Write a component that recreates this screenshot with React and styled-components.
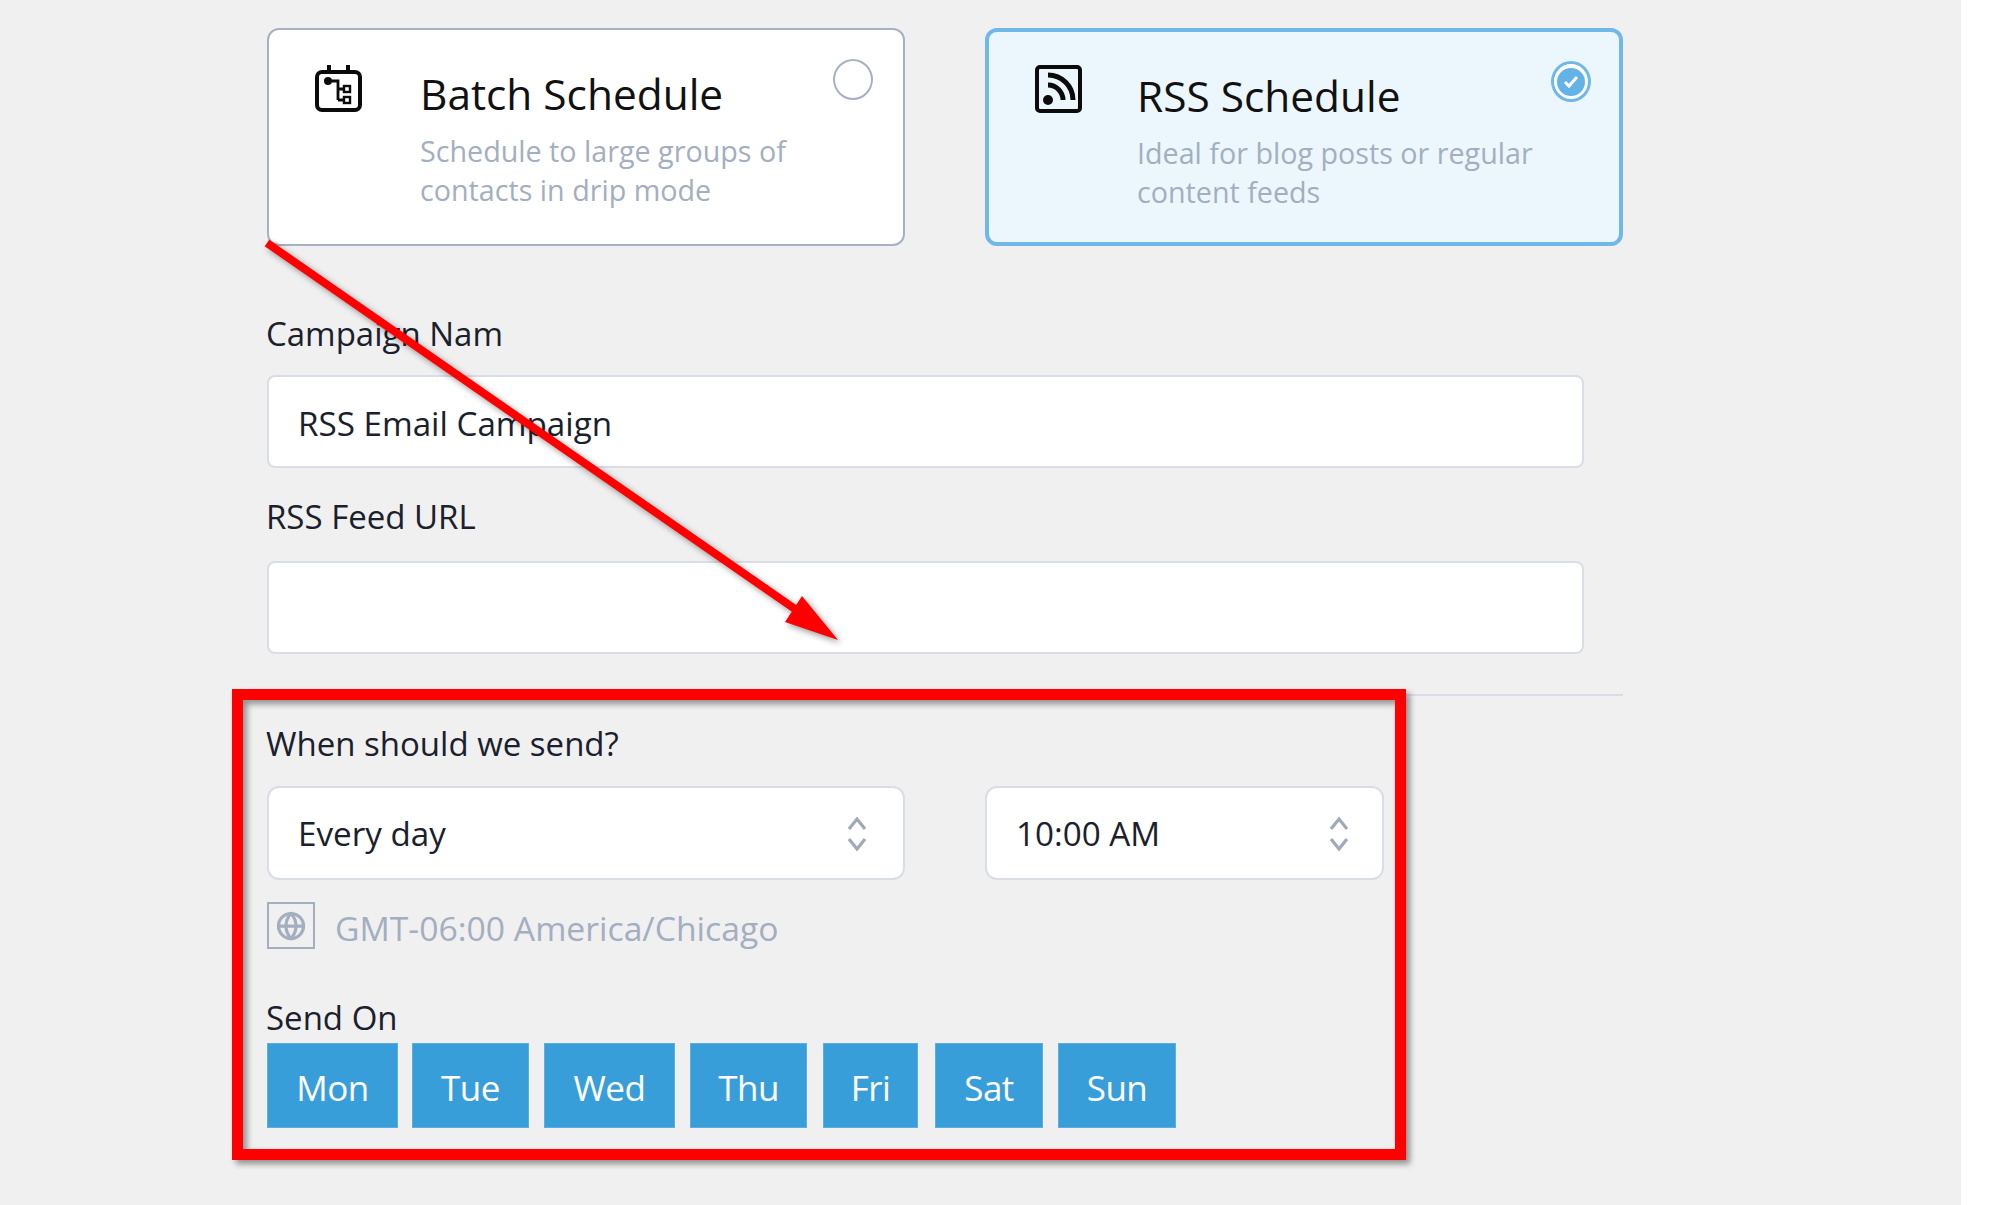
import React from 'react'
import styled, { createGlobalStyle } from 'styled-components'
import { Globe } from 'lucide-react'

const GlobalStyle = createGlobalStyle`
  html, body {
    margin: 0;
    background: #fff;
  }

  * {
    box-sizing: border-box;
  }
`

const Page = styled.main`
  position: relative;
  width: 1961px;
  height: 1205px;
  padding: 28px 0 0 267px;
  overflow: hidden;
  background: #f0f0f0;
  color: #1a202c;
  font-family: "Open Sans", "Noto Sans", sans-serif;
`

const Content = styled.div`
  width: 1356px;
  display: flex;
  flex-direction: column;
`

const CardRow = styled.div`
  display: grid;
  grid-template-columns: 638px 638px;
  gap: 80px;
`

const Card = styled.div`
  position: relative;
  height: 218px;
  display: flex;
  padding: ${({ $selected }) => ($selected ? '33px 0 0 46px' : '34px 0 0 46px')};
  background: ${({ $selected }) => ($selected ? '#ebf7fd' : '#fff')};
  border: ${({ $selected }) => ($selected ? '4px solid #6fb8e8' : '2px solid #a6b1c4')};
  border-radius: 12px;
`

const CardIcon = styled.svg`
  width: 47px;
  height: 48px;
  flex: none;
  color: #0b0b0b;
`

const CardText = styled.div`
  margin-left: ${({ $selected }) => ($selected ? '55px' : '58px')};
  padding-top: ${({ $selected }) => ($selected ? '6px' : '5px')};
`

const CardTitle = styled.h3`
  margin: 0;
  font-size: 42.4px;
  line-height: 50px;
  font-weight: 400;
  color: #111;
`

const CardDesc = styled.p`
  width: 440px;
  margin: 12px 0 0;
  font-size: 28.7px;
  line-height: 39px;
  color: #a3aec0;
`

const Radio = styled.span`
  position: absolute;
  top: 29px;
  right: ${({ $selected }) => ($selected ? '28px' : '30px')};
  width: 40px;
  height: 41px;
  display: flex;
  align-items: center;
  justify-content: center;
  border-radius: 50%;
  background: ${({ $selected }) => ($selected ? '#fff' : 'transparent')};
  border: ${({ $selected }) => ($selected ? '3px solid #6fb8e8' : '2px solid #a6b1c4')};
`

const RadioDot = styled.span`
  width: 28px;
  height: 28px;
  display: flex;
  align-items: center;
  justify-content: center;
  border-radius: 50%;
  background: #63b3e6;
`

const Label = styled.label`
  display: block;
  height: 40px;
  margin: ${({ $top }) => $top}px 0 ${({ $bottom }) => $bottom}px -1px;
  font-size: 33px;
  line-height: 40px;
  color: #1a202c;
`

const TextField = styled.input`
  display: block;
  width: 1317px;
  height: 93px;
  padding: 3px 29px 0;
  background: #fff;
  border: 2px solid #d9dde6;
  border-radius: 8px;
  outline: none;
  font-family: inherit;
  font-size: 33.2px;
  color: #1a202c;
`

const Divider = styled.hr`
  width: 100%;
  height: 2px;
  margin: 40px 0 0;
  border: 0;
  background: #d9dde6;
`

const SelectRow = styled.div`
  display: flex;
  gap: 80px;
`

const SelectBox = styled.div`
  width: ${({ $width }) => $width}px;
  height: 94px;
  display: flex;
  align-items: center;
  justify-content: space-between;
  padding: 1px ${({ $right }) => $right}px 0 29px;
  background: #fff;
  border: 2px solid #d9dde6;
  border-radius: 12px;
  font-size: 33.2px;
  color: #1a202c;
`

const TimezoneRow = styled.div`
  display: flex;
  align-items: flex-start;
  gap: 20px;
  margin-top: 22px;
`

const GlobeBox = styled.span`
  width: 48px;
  height: 47px;
  display: flex;
  justify-content: center;
  padding-top: 7px;
  border: 2px solid #a3aec0;
  color: #a3aec0;
`

const TimezoneText = styled.span`
  font-size: 33.7px;
  line-height: 52px;
  color: #a3aec0;
`

const DayRow = styled.div`
  display: flex;
`

const DayButton = styled.button`
  width: ${({ $width }) => $width}px;
  height: 85px;
  margin-right: ${({ $gap }) => $gap}px;
  padding: 3px 0 0;
  background: #389eda;
  border: 1px solid #5aaee0;
  color: #fff;
  font-family: inherit;
  font-size: 35px;
  letter-spacing: -0.5px;
`

const Annotation = styled.div`
  position: absolute;
  left: 232px;
  top: 689px;
  width: 1174px;
  height: 471px;
  border: 11px solid #ff0000;
  box-shadow: 4px 4px 6px rgba(0, 0, 0, 0.4), inset 4px 4px 6px rgba(0, 0, 0, 0.4);
  pointer-events: none;
`

const ArrowLayer = styled.svg`
  position: absolute;
  left: 0;
  top: 0;
  width: 1961px;
  height: 1205px;
  filter: drop-shadow(3px 3px 3px rgba(0, 0, 0, 0.4));
  pointer-events: none;
`

const days = [
  { name: 'Mon', width: 131, gap: 14 },
  { name: 'Tue', width: 117, gap: 15 },
  { name: 'Wed', width: 131, gap: 15 },
  { name: 'Thu', width: 117, gap: 16 },
  { name: 'Fri', width: 95, gap: 17 },
  { name: 'Sat', width: 108, gap: 15 },
  { name: 'Sun', width: 118, gap: 0 },
]

const BatchIcon = () => (
  <CardIcon viewBox="0 0 47 48" fill="none" stroke="currentColor">
    <rect x="2" y="8" width="43" height="38" rx="5" strokeWidth="4" />
    <path d="M14 1v7M33 1v7" strokeWidth="4" />
    <circle cx="13" cy="17" r="4" fill="currentColor" stroke="none" />
    <path d="M13 17h10v19M23 25h6M23 36h6" strokeWidth="2.8" />
    <rect x="29" y="22" width="6" height="6" strokeWidth="2.4" />
    <rect x="29" y="33" width="6" height="6" strokeWidth="2.4" />
  </CardIcon>
)

const RssIcon = () => (
  <CardIcon viewBox="0 0 47 48" fill="none" stroke="currentColor">
    <rect x="2" y="2" width="43" height="44" rx="3" strokeWidth="4" />
    <circle cx="13" cy="35" r="5" fill="currentColor" stroke="none" />
    <path d="M13 20a15 15 0 0 1 15 15" strokeWidth="5" />
    <path d="M13 10a25 25 0 0 1 25 25" strokeWidth="5" />
  </CardIcon>
)

const UpDown = () => (
  <svg width="20" height="36" viewBox="0 0 20 36" fill="none" stroke="#a0a9b8" strokeWidth="3.2">
    <path d="M2 13l8-10 8 10M2 23l8 10 8-10" />
  </svg>
)

const App = () => (
  <Page>
    <GlobalStyle />
    <Content>
      <CardRow>
        <Card>
          <BatchIcon />
          <CardText>
            <CardTitle>Batch Schedule</CardTitle>
            <CardDesc>Schedule to large groups of contacts in drip mode</CardDesc>
          </CardText>
          <Radio />
        </Card>
        <Card $selected>
          <RssIcon />
          <CardText $selected>
            <CardTitle>RSS Schedule</CardTitle>
            <CardDesc>Ideal for blog posts or regular content feeds</CardDesc>
          </CardText>
          <Radio $selected>
            <RadioDot>
              <svg width="16" height="14" viewBox="0 0 16 14" fill="none" stroke="#fff" strokeWidth="3">
                <path d="M2 7l4 4 8-9" />
              </svg>
            </RadioDot>
          </Radio>
        </Card>
      </CardRow>

      <Label $top={68} $bottom={21}>Campaign Nam</Label>
      <TextField readOnly value="RSS Email Campaign" />
      <Label $top={29} $bottom={24}>RSS Feed URL</Label>
      <TextField readOnly value="" />
      <Divider />

      <Label $top={28} $bottom={22}>When should we send?</Label>
      <SelectRow>
        <SelectBox $width={638} $right={36}>
          Every day
          <UpDown />
        </SelectBox>
        <SelectBox $width={399} $right={33}>
          10:00 AM
          <UpDown />
        </SelectBox>
      </SelectRow>
      <TimezoneRow>
        <GlobeBox>
          <Globe size={30} strokeWidth={2.6} />
        </GlobeBox>
        <TimezoneText>GMT-06:00 America/Chicago</TimezoneText>
      </TimezoneRow>

      <Label $top={44} $bottom={5}>Send On</Label>
      <DayRow>
        {days.map((day) => (
          <DayButton key={day.name} $width={day.width} $gap={day.gap}>{day.name}</DayButton>
        ))}
      </DayRow>
    </Content>

    <Annotation />
    <ArrowLayer viewBox="0 0 1961 1205">
      <path d="M267 243L795 609" stroke="#ff0000" strokeWidth="8" />
      <path d="M802 596L838 640L785 622Z" fill="#ff0000" />
    </ArrowLayer>
  </Page>
)

export default App
